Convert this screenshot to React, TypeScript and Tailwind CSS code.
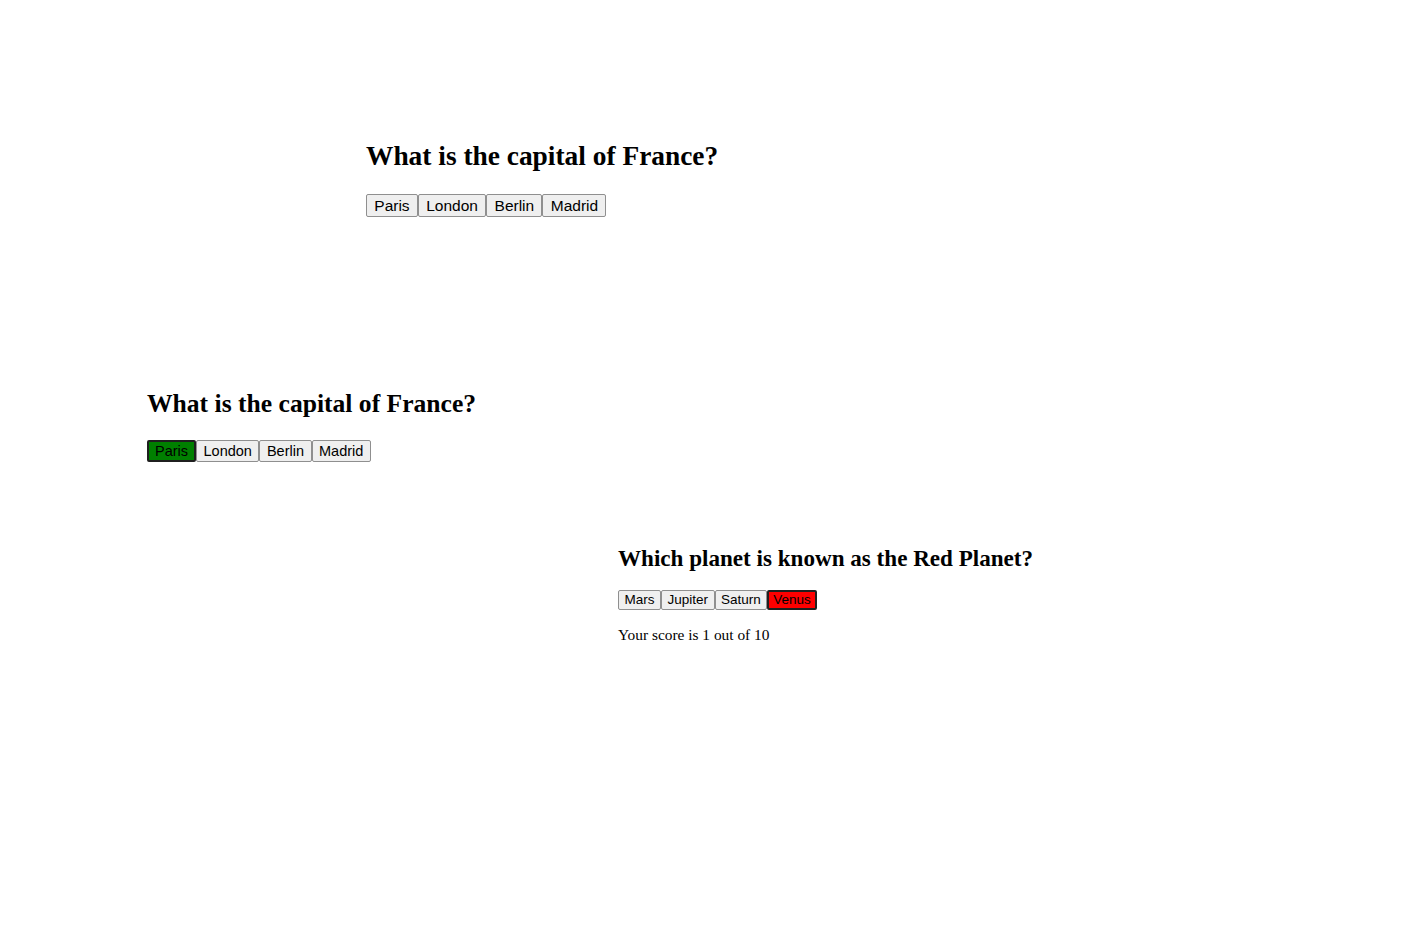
import React from "react";

const serif = { fontFamily: '"Liberation Serif", "Times New Roman", serif' };

type Opt = { label: string; state?: "right" | "wrong" };

function Buttons({ opts, size }: { opts: Opt[]; size: "lg" | "md" | "sm" }) {
  const base =
    size === "lg"
      ? "text-[15.5px] h-[23px]"
      : size === "md"
      ? "text-[14.5px] h-[22px]"
      : "text-[13.5px] h-[20px]";
  const pad = (sel: boolean) =>
    size === "lg"
      ? "px-[7.3px]"
      : size === "md"
      ? sel
        ? "px-[6px]"
        : "px-[6.5px]"
      : sel
      ? "px-[4px]"
      : "px-[5.5px]";
  return (
    <div className="flex">
      {opts.map((o) => (
        <button
          key={o.label}
          className={
            "border rounded-[2px] leading-none text-black font-['Liberation_Sans',Arial,sans-serif] " +
            base +
            " " +
            pad(!!o.state) +
            " " +
            (o.state === "right"
              ? "bg-[#008000] border-[#1f1f1f] border-2"
              : o.state === "wrong"
              ? "bg-[#ff0000] border-[#1f1f1f] border-2"
              : "bg-[#efefef] border-[#8f8f8f]")
          }
        >
          {o.label}
        </button>
      ))}
    </div>
  );
}

export default function App() {
  return (
    <div className="min-h-[925px] w-full bg-white text-black" style={serif}>
      <div className="pl-[366px] pt-[142.5px]">
        <h2 className="text-[27.4px] leading-[26px] font-bold">What is the capital of France?</h2>
        <div className="mt-[25.5px]">
          <Buttons
            size="lg"
            opts={[{ label: "Paris" }, { label: "London" }, { label: "Berlin" }, { label: "Madrid" }]}
          />
        </div>
      </div>
      <div className="pl-[147px] pt-[175px]">
        <h2 className="text-[25.6px] leading-[24px] font-bold">What is the capital of France?</h2>
        <div className="mt-[24px]">
          <Buttons
            size="md"
            opts={[
              { label: "Paris", state: "right" },
              { label: "London" },
              { label: "Berlin" },
              { label: "Madrid" },
            ]}
          />
        </div>
      </div>
      <div className="pl-[618px] pt-[85px]">
        <h2 className="text-[23.1px] leading-[22px] font-bold">Which planet is known as the Red Planet?</h2>
        <div className="mt-[21px]">
          <Buttons
            size="sm"
            opts={[
              { label: "Mars" },
              { label: "Jupiter" },
              { label: "Saturn" },
              { label: "Venus", state: "wrong" },
            ]}
          />
        </div>
        <p className="mt-[17px] text-[15.4px] leading-none">Your score is 1 out of 10</p>
      </div>
    </div>
  );
}
